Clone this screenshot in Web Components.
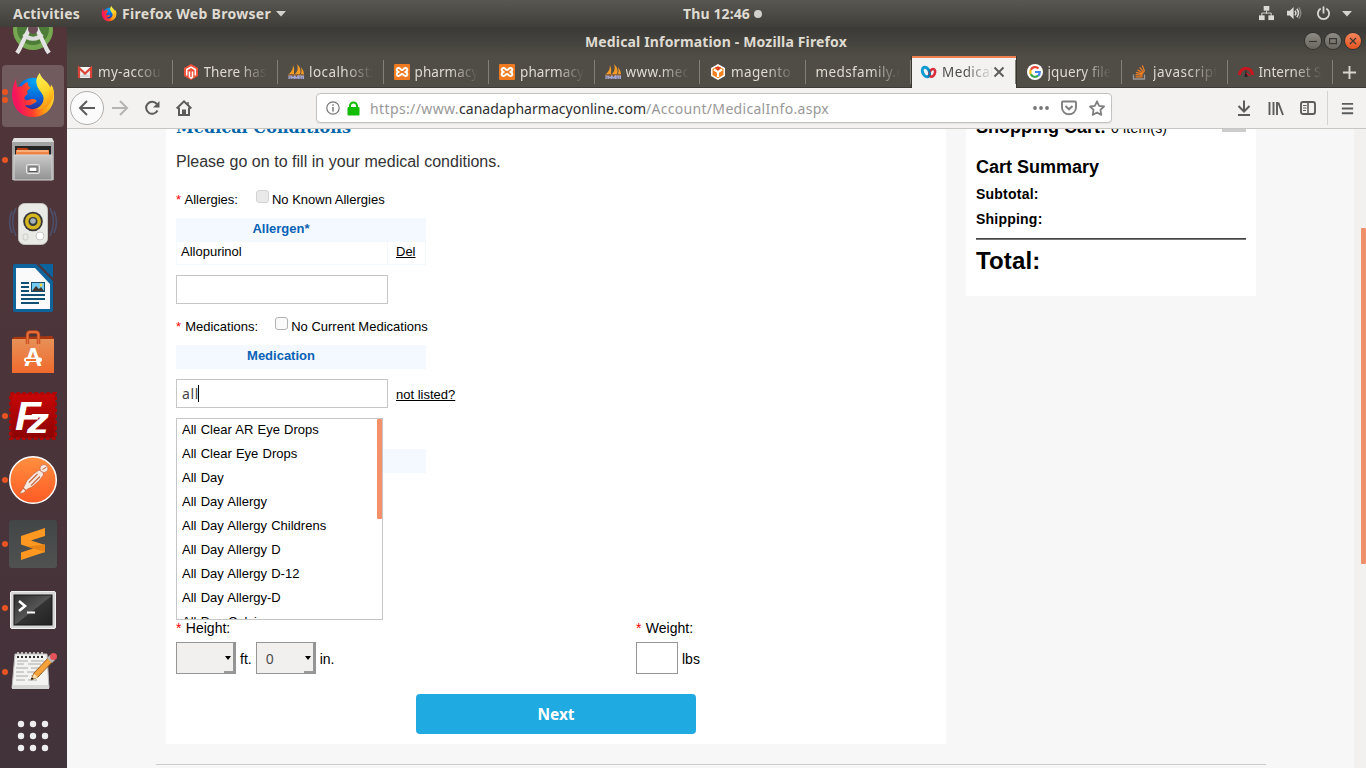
<!DOCTYPE html>
<html lang="en">
<head>
<meta charset="utf-8">
<title>Medical Information - Mozilla Firefox</title>
<style>
html,body{margin:0;height:100%;overflow:hidden}
body{font-family:"Liberation Sans",Arial,sans-serif;color:#000}
</style>
</head>
<body>
<desktop-shell></desktop-shell>
<script>
const UI = '"Noto Sans","Open Sans",sans-serif';

function define(name, css, html, after) {
  const tpl = document.createElement('template');
  tpl.innerHTML = `<style>*{box-sizing:border-box}${css}</style>${html}`;
  customElements.define(name, class extends HTMLElement {
    connectedCallback() {
      if (this.shadowRoot) return;
      this.attachShadow({mode: 'open'}).appendChild(tpl.content.cloneNode(true));
      if (after) after.call(this, this.shadowRoot);
    }
  });
}

/* Single-line label; "w" gives its set width in px, reached by tracking. */
define('ui-label', `:host{display:inline-block;white-space:pre;font-family:${UI}} span{display:inline-block}`,
  `<span><slot></slot></span>`, function (r) {
    const w = +this.getAttribute('w'), s = r.querySelector('span');
    if (w) {
      const n = this.textContent.length, d = (w - s.getBoundingClientRect().width) / n;
      s.style.letterSpacing = d.toFixed(3) + 'px';
      this.style.width = w + 'px';
    }
  });

const foxBody = `<defs><linearGradient id="g1" x1=".1" y1=".6" x2=".95" y2=".4"><stop offset="0" stop-color="#f5145f"/><stop offset=".35" stop-color="#ff3d2e"/><stop offset=".65" stop-color="#ff9412"/><stop offset="1" stop-color="#ffd52e"/></linearGradient><radialGradient id="g2" cx=".55" cy=".1" r=".95"><stop offset="0" stop-color="#00a8f5"/><stop offset=".55" stop-color="#0a64d8"/><stop offset="1" stop-color="#35208c"/></radialGradient><linearGradient id="g3" x1="0" y1="0" x2=".3" y2="1"><stop offset="0" stop-color="#fff45a"/><stop offset=".6" stop-color="#ffd52a"/><stop offset="1" stop-color="#ff9a12"/></linearGradient></defs>
<circle cx="24" cy="22" r="17" fill="url(#g2)"/>
<path d="M6.500 5.500C3 12 1.500 20 2.500 27 4 38 12.500 46 24 46c12 0 21.500-9 22-21 .2-5-1-9-3-12l-8 16c-1 5-6 9-12 8.500-3.500-.3-6-2-7.500-4.500 4 1.500 7 .5 9.500-1.500 1.500-1 3-1 2.500-2.500-.8-2-4-2.500-6-1.500-2.500 1.200-5 1.200-6.500-.5 0-2 1-3.500 3-4.500.3-1.500.5-2.500-.2-3.500 1-1.500 2.800-2.800 4.200-3.500-2.500-.3-3.500-3.500-3.500-6-3 .8-5 3-6.500 4.500-2-.3-3.500 0-4.500.8C6.500 11 6 9 6.500 5.500z" fill="url(#g1)"/>
<path d="M31 0c-4 4.500-4.500 10-2 15 2 4 6 6.500 6 11.500 0 5-3.500 9-7.500 10.500 4 2 9.500 0 13-4 4-4.500 6-9.500 5-15-.5-3-1.500-4.500-3-6 .3 1.500.4 3 0 4C40 8.500 33 7 31 0z" fill="url(#g3)"/>`;

const ICONS = {
  fox: ['0 0 48 48', foxBody],
  studio: ['0 0 48 48', `<g transform="translate(0 6)"><circle cx="24" cy="16" r="20" fill="#75a850"/><circle cx="24" cy="15" r="16" fill="#4d7c38"/><path d="M15 20a11 11 0 0 0 18 0" fill="none" stroke="#ddd" stroke-width="4"/><path d="M22 11 10 36l-2 3M26 11l12 25 2 3" fill="none" stroke="#e3e3e3" stroke-width="4.200"/><circle cx="24" cy="15" r="5" fill="#6a4b56"/></g>`],
  files: ['0 0 48 48', `<defs><linearGradient id="a" y2="1" x2="0"><stop offset="0" stop-color="#c9c9c9"/><stop offset="1" stop-color="#929292"/></linearGradient></defs><path d="M5 2h38l2 4v38H3V6z" fill="#a4a4a4"/><path d="M5 2h38l2 4H3z" fill="#e1e1e1"/><rect x="6" y="10" width="36" height="11" fill="#252525"/><path d="M8 12h10l2 2h20v8H8z" fill="#b83c10"/><path d="M7 14h33v8H7z" fill="#ef8244"/><path d="M8 15h31" stroke="#ffd9ae"/><rect x="5" y="19" width="38" height="25" fill="url(#a)" stroke="#d5d5d5"/><rect x="17.500" y="28.500" width="13" height="9" rx="1.500" fill="#aaa" stroke="#e6e6e6"/><rect x="20" y="31" width="8" height="4.500" fill="#fff" stroke="#555"/>`],
  speaker: ['0 0 48 48', `<g fill="none" stroke="#4c506b" stroke-width="1.600"><path d="M7 8q-7 13 0 28M3 11q-5 11 0 22M41 8q7 13 0 28M45 11q5 11 0 22"/></g><rect x="9.500" y="3.500" width="29" height="41" rx="6" fill="#e9e9e6" stroke="#c4c4c0"/><circle cx="24" cy="21.500" r="9.800" fill="#37373a"/><circle cx="24" cy="21.500" r="8" fill="#d6b720"/><circle cx="24" cy="21.500" r="4.500" fill="#333a40"/><circle cx="24" cy="21" r="2.800" fill="#a7b4b9"/><circle cx="31" cy="36" r="4" fill="#fff" stroke="#c9c9c6"/><rect x="14" y="34" width="5" height="6" rx="2" fill="none" stroke="#ccc"/>`],
  writer: ['0 0 48 48', `<path d="M6 0h21l17 17v29a2 2 0 0 1-2 2H6a2 2 0 0 1-2-2V2a2 2 0 0 1 2-2z" fill="#10649c"/><path d="M7 4h19l15 16v25H7z" fill="#fafafa"/><path d="M30 0h14v14z" fill="#0c649e"/><path d="M12 19h8m-8 4h8m-8 4h8m-8 4h24m-24 4h24m-24 4h18" stroke="#114f75" stroke-width="2"/><rect x="22.500" y="18.500" width="13" height="9" fill="#74cbef" stroke="#174f70"/><path d="m23 27 4-5 3 3 2-2 3 4z" fill="#43362f"/><circle cx="32" cy="21" r="1.400" fill="#ffd22e"/>`],
  store: ['0 0 48 48', `<defs><linearGradient id="a" y2="1" x2="0"><stop offset="0" stop-color="#e79158"/><stop offset="1" stop-color="#f06a2c"/></linearGradient></defs><path d="m5 9 38-1 2 3v4H3v-4z" fill="#a8360f"/><path d="M3 11h42v34H3z" fill="url(#a)"/><path d="M18.500 16V7q0-3 3-3h5q3 0 3 3v9" fill="none" stroke="#b9471b" stroke-width="3.400"/><path d="M18.500 16V7q0-3 3-3h5q3 0 3 3v9" fill="none" stroke="#e56d39" stroke-width="2"/><text x="24" y="38" text-anchor="middle" font-family="Liberation Sans" font-weight="700" font-size="25" fill="#fff">A</text><rect x="15" y="29.500" width="18" height="4.500" rx="2" fill="#fff"/><rect x="17" y="31" width="10" height="2" fill="#ee7433"/>`],
  fz: ['0 0 48 48', `<defs><linearGradient id="a" y2="1" x2="0"><stop offset="0" stop-color="#c80606"/><stop offset="1" stop-color="#8b0404"/></linearGradient></defs><rect x="1.500" y="1.500" width="45" height="45" fill="url(#a)" /><rect x="1.500" y="1.500" width="45" height="45" fill="none" stroke="#b00505" stroke-width="3" stroke-dasharray="3.500 2.500"/><g font-family="Liberation Sans" font-weight="700" font-style="italic" fill="#fff"><text x="6" y="38" font-size="41" textLength="26" lengthAdjust="spacingAndGlyphs">F</text><text x="18" y="41" font-size="35" textLength="22" lengthAdjust="spacingAndGlyphs">z</text></g>`],
  postman: ['0 0 48 48', `<defs><linearGradient id="a" y2="1" x2="0"><stop offset="0" stop-color="#ff9040"/><stop offset="1" stop-color="#ff5a24"/></linearGradient></defs><circle cx="24" cy="24" r="23.300" fill="url(#a)" stroke="#fff" stroke-width="1.500"/><path d="m10.500 37.500 3.500-5 4-8 7-7 5-3.500 4 2 .5 3-4.500 6-7 6-4.500 2-4 4z" fill="#f6e8df" stroke="#c96038" stroke-width=".7"/><path d="M20 26.500 28.500 18M22 29.500l9-9M14 32l3 2.500" stroke="#ca6a43" stroke-width="1.200"/><circle cx="35" cy="12.500" r="4" fill="#f6e8df" stroke="#c96038" stroke-width=".7"/><path d="m33.500 13.500 4-2.500" stroke="#bd5630"/>`],
  sublime: ['0 0 48 48', `<defs><linearGradient id="a" y2="1" x2="0"><stop offset="0" stop-color="#434646"/><stop offset="1" stop-color="#505252"/></linearGradient></defs><rect width="48" height="48" rx="3" fill="url(#a)"/><path d="m12 32.500 24-8v7.500l-24 8z" fill="#ff9821"/><path d="m12 16 24-8v8l-14 4.500L36 25v7.500l-24-8z" fill="#ff9821"/><path d="m18 26.500 18-2v7.500z" fill="#e68416"/>`],
  term: ['0 0 48 48', `<defs><linearGradient id="a" x2="1" y2="1"><stop offset="0" stop-color="#2e2e2e"/><stop offset=".5" stop-color="#555"/><stop offset=".52" stop-color="#333"/><stop offset="1" stop-color="#222"/></linearGradient></defs><rect x="1.500" y="7.500" width="45" height="37" rx="1.500" fill="#d6d6d6" stroke="#f0f0f0"/><rect x="5" y="11" width="38" height="30" fill="url(#a)" stroke="#171717"/><path d="m10 17 6 5-6 5" stroke="#fff" stroke-width="2.600" fill="none"/><path d="M18 28.500h8" stroke="#fff" stroke-width="2"/>`],
  note: ['0 0 48 48', `<path d="m6 6 32 0 2 34H3z" fill="#f3f3f1" stroke="#bababa"/><path d="M3 37h37v4H3z" fill="#d6d6d4"/><path d="M8 13h11m3 0h13M8 16h7m4 0h13M7 20h12m3 0h9M7 24h8m3 0h13M7 28h12m3 0h8M7 32h9m3 0h9" stroke="#aaa" stroke-width="1"/><g fill="none" stroke="#ddd" stroke-width="1.500"><path d="M9 9V4m4 5V4m4 5V4m4 5V4m4 5V4m4 5V4m4 5V4"/></g><path d="M8 9h27" stroke="#333" stroke-width="2" stroke-dasharray="2"/><path d="m25 25 16-17 4 4-16 17-7 3z" fill="#f6a23b" stroke="#9b5d1f"/><path d="m25 26 4 3-7 3z" fill="#f9dca9"/><path d="m22 31 2-1 0 1z" stroke="#222"/><path d="m38 10 3-3 5 5-3 3z" fill="#b8b8b8"/><circle cx="44.500" cy="8.500" r="3.500" fill="#e2535a"/>`],
  apps: ['0 0 48 48', `<g fill="#eee"><circle cx="12" cy="12" r="3.200"/><circle cx="24" cy="12" r="3.200"/><circle cx="36" cy="12" r="3.200"/><circle cx="12" cy="24" r="3.200"/><circle cx="24" cy="24" r="3.200"/><circle cx="36" cy="24" r="3.200"/><circle cx="12" cy="36" r="3.200"/><circle cx="24" cy="36" r="3.200"/><circle cx="36" cy="36" r="3.200"/></g>`],
  gmail: ['0 0 16 16', `<rect x="1" y="3" width="14" height="11" fill="#eee"/><path d="m3 13 5-5 5 5z" fill="#d5d5d5"/><path d="M2 14V4l6 5.500L14 4v10" fill="none" stroke="#db4437" stroke-width="2.200"/><path d="M3.500 3h9L8 7z" fill="#fafafa"/>`],
  magento: ['0 0 16 16', `<path d="m8 0 7 4v8l-7 4-7-4V4z" fill="#ef5138"/><path d="M3.700 11.500V5.500L8 3l4.300 2.500v6M6.500 13V7.500m3 0V13L8 14 6.500 13" fill="none" stroke="#fff" stroke-width="1.500"/>`],
  pma: ['0 0 16 16', `<path d="M1 10Q5 7 5 1q2 4 1 9zM7 10q4-4 2-10 5 5 3 10zM13 10q1-3 0-7 3 4 3 7z" fill="#f59a25"/><path d="M0 11h16" stroke="#ce7a22"/><path d="M1 15v-3h2v2H1m3 1v-3m2 3v-3m-2 1.500h2M7 15v-3l1.500 2L10 12v3m1 0v-3h2v2h-2m3 1v-3h1.500v3" fill="none" stroke="#a6a6d2" stroke-width="1.100"/>`],
  xampp: ['0 0 16 16', `<rect width="16" height="16" rx="1" fill="#f07a20"/><path d="M5.500 8C2 8 2 4 4.500 4 6.500 4 6.500 6 8 6s1.500-2 3.500-2C14 4 14 8 10.500 8c3.500 0 3.500 4 1 4-2 0-2-2-3.500-2s-1.500 2-3.500 2C2 12 2 8 5.500 8z" fill="none" stroke="#fff" stroke-width="2"/>`],
  cube: ['0 0 16 16', `<path d="m8 0 7 4v8l-7 4-7-4V4z" fill="#fff"/><path d="m8 2 5.500 3v6L8 14.300 2.500 11V5z" fill="#f48120"/><path d="M4 5.500 8 8v5M12 5.500 8 8" stroke="#fff" stroke-width="2.200" fill="none"/><path d="m5 3 3 4 3-4z" fill="#df3b28"/>`],
  meds: ['0 0 16 16', `<ellipse cx="5" cy="8" rx="3.300" ry="5" transform="rotate(-25 5 8)" fill="none" stroke="#129bd3" stroke-width="3"/><ellipse cx="11.300" cy="8.800" rx="2.600" ry="4" transform="rotate(22 11.300 8.800)" fill="none" stroke="#d72d3a" stroke-width="2.600"/><path d="M8 5.500 9 10l-2 3" fill="none" stroke="#087aad" stroke-width="2"/>`],
  google: ['0 0 16 16', `<circle cx="8" cy="8" r="8" fill="#fff"/><g fill="none" stroke-width="2.200"><path d="M11.500 4.500A4.800 4.800 0 0 0 3.800 5.700" stroke="#ea4335"/><path d="M3.800 5.700a4.800 4.800 0 0 0 0 4.600" stroke="#fbbc05"/><path d="M3.800 10.300a4.800 4.800 0 0 0 7.400 1.400" stroke="#34a853"/><path d="M11.200 11.700A4.800 4.800 0 0 0 12.800 8H8" stroke="#4285f4"/></g>`],
  stack: ['0 0 16 16', `<path d="M1.500 10.500V15h11v-4.500" fill="none" stroke="#999" stroke-width="1.300"/><path d="M3.500 12.800h7M3.600 10.600l7 .6M4 8.300l6.700 1.900M5.500 5.800l5.700 3.700M7.700 3.400l4.200 5.200M10.300 1.500l2.300 6" stroke="#f48024" stroke-width="1.200"/>`],
  speed: ['0 0 16 16', `<path d="M1.500 11a6.500 6.500 0 1 1 13 0" fill="none" stroke="#c9151d" stroke-width="3"/><path d="M6.500 13 8 5l1.500 8z" fill="#222"/><path d="m8 9 4.500 3" stroke="#c9151d" stroke-width="1.500"/>`],
  lan: ['0 0 16 16', `<g fill="#dcdad5"><rect x="5" y="0" width="6" height="5"/><rect x="0" y="10" width="6" height="5"/><rect x="10" y="10" width="6" height="5"/></g><path d="M8 5v3M3 11V7.500h10V11" fill="none" stroke="#dcdad5"/>`],
  vol: ['0 0 16 16', `<path d="M0 5h3l4-4v13L3 10H0z" fill="#dcdad5"/><path d="M8.500 5q2 2.500 0 5M10.500 3q3.500 4.500 0 9" fill="none" stroke="#dcdad5" stroke-width="1.600"/><path d="M12.500 1.500q4.500 6 0 12" fill="none" stroke="#8b8983" stroke-width="1.500"/>`],
  power: ['0 0 16 16', `<path d="M5 2.800a6 6 0 1 0 6 0" fill="none" stroke="#dcdad5" stroke-width="1.900"/><path d="M8 .5V8" stroke="#dcdad5" stroke-width="1.900"/>`],
  caret: ['0 0 10 6', `<path d="M0 0h10L5 5.500z" fill="#d5d3ce"/>`],
  back: ['0 0 16 16', `<path d="M16 8H1.500M8 1 1 8l7 7" fill="none" stroke="#5c5c5c" stroke-width="2"/>`],
  fwd: ['0 0 16 16', `<path d="M0 8h14.500M8 1l7 7-7 7" fill="none" stroke="#b5b4b3" stroke-width="2"/>`],
  reload: ['0 0 16 16', `<path d="M13.500 10.500A6 6 0 1 1 12.800 4" fill="none" stroke="#5c5c5c" stroke-width="2"/><path d="M15.500 1v6.500H9z" fill="#5c5c5c"/>`],
  home: ['0 0 16 16', `<path d="M.7 8.500 8 1.300l7.300 7.200" fill="none" stroke="#5c5c5c" stroke-width="2"/><path d="M3 7.500v7.500h10V7.500" fill="none" stroke="#5c5c5c" stroke-width="2"/><path d="M6 14V9.500h4V14z" fill="#5c5c5c"/><path d="M12 2v4" stroke="#5c5c5c" stroke-width="1.500"/>`],
  info: ['0 0 14 14', `<circle cx="7" cy="7" r="6.200" fill="none" stroke="#757575" stroke-width="1.200"/><path d="M7 6v4.500M7 3.300v1.500" stroke="#757575" stroke-width="1.500"/>`],
  lock: ['0 0 13 15', `<rect x=".5" y="6" width="12" height="8.500" rx="1" fill="#12bc00"/><path d="M3 8V5a3.500 3.500 0 0 1 7 0v3" fill="none" stroke="#12bc00" stroke-width="2"/>`],
  dots: ['0 0 16 16', `<g fill="#777"><circle cx="2" cy="8" r="1.900"/><circle cx="8" cy="8" r="1.900"/><circle cx="14" cy="8" r="1.900"/></g>`],
  pocket: ['0 0 16 16', `<path d="M2 1.500h12a1 1 0 0 1 1 1V7.500a7 6.800 0 0 1-14 0v-5a1 1 0 0 1 1-1z" fill="none" stroke="#808080" stroke-width="1.900"/><path d="M4.500 6 8 9.300 11.500 6" fill="none" stroke="#808080" stroke-width="2"/>`],
  star: ['0 0 16 16', `<path d="m8 1.300 2.100 4.600 4.900.6-3.600 3.400.9 5L8 12.500l-4.300 2.400.9-5L1 6.500l4.900-.6z" fill="none" stroke="#808080" stroke-width="1.800" stroke-linejoin="round"/>`],
  down: ['0 0 16 16', `<path d="M8 .5V11M2.500 6 8 11.500 13.500 6M2 15h12" fill="none" stroke="#5c5c5c" stroke-width="2"/>`],
  lib: ['0 0 16 16', `<path d="M1.500 2v13M5.500 2v13M9 2v13M10.300 2.500 15 15" fill="none" stroke="#5c5c5c" stroke-width="1.900"/>`],
  side: ['0 0 16 16', `<rect x="1" y="2" width="14" height="12" rx="2" fill="none" stroke="#5c5c5c" stroke-width="1.900"/><path d="M8 2v12" stroke="#5c5c5c" stroke-width="1.600"/><path d="M3 5.500h3.500M3 8h3.500M3 10.500h3" stroke="#5c5c5c"/>`],
  menu: ['0 0 16 16', `<path d="M2 3h12M2 8h12M2 13h12" stroke="#5c5c5c" stroke-width="2"/>`],
  plus: ['0 0 16 16', `<path d="M8 1v14M1 8h14" stroke="#d8d6d0" stroke-width="2"/>`],
  close: ['0 0 12 12', `<path d="m1.500 1.500 9 9m0-9-9 9" stroke="#5c5c5c" stroke-width="1.900"/>`]
};

define('ui-icon', `:host{display:block;flex:none}svg{display:block;width:100%;height:100%;overflow:visible}`, ``, function (r) {
  const [vb, body] = ICONS[this.getAttribute('name')];
  const w = +this.getAttribute('size') || 16, h = +this.getAttribute('h') || w;
  this.style.width = w + 'px'; this.style.height = h + 'px';
  r.innerHTML += `<svg viewBox="${vb}">${body}</svg>`;
});

define('top-bar', `:host{display:grid;grid-template-columns:670px auto 1fr;height:27px;background:linear-gradient(#595751,#3f3e39);color:#dfdbd2;font:bold 14px/27px ${UI};align-items:center;padding:0 14px 0 13px}
  .l,.r{display:flex;align-items:center}.r{justify-content:flex-end}.app{margin:0 5px 0 21px}.c{display:flex;align-items:center;gap:4px}
  i{width:8px;height:8px;border-radius:50%;background:#d2d0cb}.car{margin-left:5px}`,
  `<div class="l"><ui-label w="67">Activities</ui-label><ui-icon class="app" name="fox" size="16"></ui-icon><ui-label w="149">Firefox Web Browser</ui-label><ui-icon class="car" name="caret" size="10" h="6"></ui-icon></div>
   <div class="c"><ui-label w="67">Thu 12:46</ui-label><i></i></div>
   <div class="r"><ui-icon name="lan" size="15"></ui-icon><ui-icon name="vol" size="15" style="margin-left:13px"></ui-icon><ui-icon name="power" size="15" style="margin-left:14px"></ui-icon><ui-icon name="caret" size="10" h="6" style="margin-left:11px"></ui-icon></div>`);

define('dock-item', `:host{display:flex;height:64px;flex:none;align-items:center;padding-left:9px;position:relative}
  :host([active])::before{content:"";position:absolute;left:2px;top:1px;width:62px;height:62px;border-radius:4px;background:rgba(255,255,255,.19)}
  .dots{position:absolute;left:2px;top:0;height:64px;display:flex;flex-direction:column;justify-content:center;gap:2px}
  i{width:6px;height:6px;border-radius:50%;background:#e95420}ui-icon{position:relative}`,
  `<div class="dots"></div>`, function (r) {
    r.querySelector('.dots').innerHTML = '<i></i>'.repeat(+this.getAttribute('dots') || 0);
    r.innerHTML += `<ui-icon name="${this.getAttribute('icon')}" size="${this.getAttribute('size') || 48}"></ui-icon>`;
  });

define('app-dock', `:host{display:flex;flex-direction:column;justify-content:flex-end;width:67px;flex:none;overflow:hidden;background:linear-gradient(#513539,#4b353a 50%,#44323a 90%,#41333a)}
  .fox{padding-left:10px}`,
  `<dock-item icon="studio"></dock-item><dock-item class="fox" icon="fox" size="46" dots="2" active></dock-item><dock-item icon="files" dots="1"></dock-item><dock-item icon="speaker"></dock-item><dock-item icon="writer"></dock-item><dock-item icon="store"></dock-item><dock-item icon="fz" dots="1"></dock-item><dock-item icon="postman" dots="1"></dock-item><dock-item icon="sublime" dots="1"></dock-item><dock-item icon="term" dots="1"></dock-item><dock-item icon="note" dots="1"></dock-item><dock-item icon="apps"></dock-item>`);

define('window-title', `:host{display:grid;grid-template-columns:518px auto 1fr;align-items:center;height:29px;background:linear-gradient(#3a3935,#4f4c45);color:#dfdbd2;font:bold 14px/29px ${UI};padding-right:5px}
  .t{display:block;margin-top:-1px}.b{display:flex;justify-content:flex-end;gap:4px;margin-top:-2px}
  i{width:16px;height:16px;border-radius:50%;background:linear-gradient(#8d8b84,#68665f);display:grid;place-items:center;box-shadow:0 0 0 1px #34332f}
  .x{background:linear-gradient(#f6865c,#e4531f)}svg{width:8px;height:8px;fill:none;stroke:#3a3834;stroke-width:1.200}`,
  `<span></span><ui-label class="t" w="262">Medical Information - Mozilla Firefox</ui-label><div class="b"><i><svg><path d="M0 4.500h8"/></svg></i><i><svg><path d="M.6 1.600h6.800v5H.6z"/></svg></i><i class="x"><svg><path d="m1 1 6 6m0-6-6 6"/></svg></i></div>`);

define('browser-tab', `:host{display:flex;align-items:center;width:105.500px;flex:none;height:32px;position:relative;padding:0 11px 0 10px;color:#dfdbd2;font:13.500px/32px ${UI}}
  :host::after,:host(:not([active]):not([last]))::after{content:"";position:absolute;right:0;top:4px;height:24px;width:1px;background:#827f78}
  :host([active]){background:#f3f2f1;color:#4c4c4c;border:solid #363530;border-width:0 1px;box-shadow:inset 0 2px #ef7f52;padding-left:9px}
  .t{flex:1;min-width:0;overflow:hidden;white-space:pre;margin-left:5px;-webkit-mask-image:linear-gradient(90deg,#000 calc(100% - 28px),transparent)}
  .none{margin-left:0}`, ``, function (r) {
    const ic = this.getAttribute('icon'), act = this.hasAttribute('active');
    r.innerHTML += `${ic ? `<ui-icon name="${ic}" size="16"></ui-icon>` : ''}<div class="t${ic ? '' : ' none'}"><ui-label w="${this.getAttribute('w')}">${this.getAttribute('label')}</ui-label></div>${act ? '<ui-icon name="close" size="12"></ui-icon>' : ''}`;
  });

define('tab-strip', `:host{display:flex;align-items:center;height:32px;background:#504d46;box-shadow:inset 0 -1px #3b3a36}
  .new{margin-left:9px}`,
  `<browser-tab icon="gmail" label="my-accou" w="63"></browser-tab><browser-tab icon="magento" label="There has" w="63"></browser-tab><browser-tab icon="pma" label="localhost:" w="65"></browser-tab><browser-tab icon="xampp" label="pharmacy" w="64"></browser-tab><browser-tab icon="xampp" label="pharmacy" w="64"></browser-tab><browser-tab icon="pma" label="www.med" w="66"></browser-tab><browser-tab icon="cube" label="magento" w="60"></browser-tab><browser-tab label="medsfamily.c" w="88" last></browser-tab><browser-tab icon="meds" label="Medical" w="52" active></browser-tab><browser-tab icon="google" label="jquery file" w="64"></browser-tab><browser-tab icon="stack" label="javascript" w="66"></browser-tab><browser-tab icon="speed" label="Internet S" w="63"></browser-tab><ui-icon class="new" name="plus" size="15"></ui-icon>`);

define('nav-bar', `:host{display:flex;align-items:center;height:41px;background:#f3f2f1;border-bottom:1px solid #c8c6c3;padding:0 11px 0 3px;font:14px/28px ${UI}}
  .back{width:34px;height:34px;border-radius:50%;border:1px solid #b0aeac;background:#fbfbfb;display:grid;place-items:center}
  .url{display:flex;align-items:center;width:796px;height:30px;margin-left:124px;background:#fff;border:1px solid #c4c2bf;border-radius:4px;padding:0 6px 0 9px;color:#999;box-shadow:0 1px 1px #0001}
  .url ui-label{margin-top:2px}
  .d{color:#2e2e2e}.sep{width:1px;height:34px;background:#d5d3d1;margin:0 12px 0 11px}`,
  `<div class="back"><ui-icon name="back" size="16"></ui-icon></div><ui-icon name="fwd" size="16" style="margin-left:8px"></ui-icon><ui-icon name="reload" size="16" style="margin-left:16px"></ui-icon><ui-icon name="home" size="16" style="margin-left:16px"></ui-icon>
  <div class="url"><ui-icon name="info" size="14"></ui-icon><ui-icon name="lock" size="13" h="15" style="margin:0 10px 0 7px"></ui-icon><ui-label w="89">https://www.</ui-label><ui-label class="d" w="187">canadapharmacyonline.com</ui-label><ui-label w="183">/Account/MedicalInfo.aspx</ui-label><span style="flex:1"></span><ui-icon name="dots"></ui-icon><ui-icon name="pocket" style="margin:0 12px"></ui-icon><ui-icon name="star"></ui-icon></div>
  <span style="flex:1"></span><ui-icon name="down"></ui-icon><ui-icon name="lib" style="margin:0 16px"></ui-icon><ui-icon name="side"></ui-icon><span class="sep"></span><ui-icon name="menu" size="15"></ui-icon>`);

define('field-label', `:host{display:block;white-space:pre;word-spacing:.5px}b{color:red;font-weight:400}`, `<b>*</b> <slot></slot>`);
define('check-box', `:host{display:flex;font-size:13px}i{width:13px;height:13px;margin:0 3px 0 0;border:1px solid #b4b2b0;border-radius:3px;background:#fafafa;flex:none}:host([disabled]) i{background:#e9e9e9;border-color:#d4d4d4}`, `<i></i><slot></slot>`);
define('grid-head', `:host{display:block;width:250px;height:24px;background:#f4f9ff;color:#0862b5;font:bold 13px/22px "Liberation Sans",Arial,sans-serif;text-align:center}div{width:210px}`, `<div><slot></slot></div>`);
define('text-field', `:host{display:flex;align-items:center;width:212px;height:29px;border:1px solid #c6c6c6;background:#fff;padding:0 0 1px 5px;font:14px ${UI};color:#444}`, `<slot></slot>`);
define('select-box', `:host{display:flex;align-items:center;justify-content:space-between;width:60px;height:32px;background:#f1f0ef;border:1px solid #959595;border-right-width:3px;padding:0 1px 0 9px;font:14px "Noto Sans",sans-serif;color:#4c4c4c;position:relative}
  i{border:4px solid transparent;border-top-color:#000;border-bottom:0;border-left-width:3.500px;border-right-width:3.500px;margin:0 1px 1px 0}
  u{position:absolute;right:-1px;bottom:0;width:10px;height:2px;background:#999}`, `<span><slot></slot></span><i></i><u></u>`);
define('suggest-list', `:host{display:block;width:207px;height:202px;border:1px solid #c6c6c6;background:#fff;overflow:hidden;padding-left:5px;position:relative;font-size:13px;word-spacing:.6px}
  p{margin:0;height:24px;line-height:22px}i{position:absolute;right:0;top:0;width:5px;height:100px;border-radius:1px;background:#f4916b}`, `<i></i>`, function (r) {
    r.innerHTML += this.getAttribute('items').split('|').map(t => `<p>${t}</p>`).join('');
  });

define('medical-form', `:host{display:block;width:780px;height:615px;background:#fff;padding:0 10px;overflow:hidden;font-size:13px;line-height:20px}
  h2{margin:-11px 0 0;height:20px;line-height:20px;color:#06a;font-size:16px}
  p{margin:14px 0 18px;font-size:16px;color:#333;height:20px;word-spacing:.12px}
  .row{display:flex;height:20px;gap:17px}.me{margin:13px 0 8px}
  .al{margin-bottom:8px;gap:18px}
  .tr{display:grid;grid-template-columns:210px 40px;width:250px;height:23px;border:1px solid #f4f9ff;border-top:0}
  .tr span{padding-left:4px;line-height:20px}.tr span+span{padding-left:8px;border-left:1px solid #f4f9ff}
  u{text-decoration-thickness:1px;text-underline-offset:1px}
  .f1{margin-top:10px}.med{display:flex;margin:10px 0;gap:8px;align-items:center}.med u{margin-top:3px}
  .caret{width:1px;height:17px;background:#000;margin-left:-1px}
  .drop{display:grid;grid-template-columns:1fr;height:200px}.drop>*{grid-area:1/1}.drop grid-head{margin-top:31px}.drop suggest-list{position:relative;z-index:1}
  .hw{display:grid;grid-template-columns:460px auto;font-size:14px;row-gap:4px;line-height:20px}
  .in{display:flex;gap:4px;align-items:center;height:32px}.w{width:42px;height:32px;border:1px solid #959595}.in span{margin-top:2px}
  .next{width:280px;height:40px;margin:20px auto 0;border-radius:4px;background:#1faae1;color:#fff;font:bold 15.500px/40px ${UI};text-align:center}`,
  `<h2><ui-label w="175" style="font-family:'DejaVu Serif',serif">Medical Conditions</ui-label></h2>
  <p>Please go on to fill in your medical conditions.</p>
  <div class="row al"><field-label>Allergies:</field-label><check-box disabled>No Known Allergies</check-box></div>
  <grid-head>Allergen*</grid-head><div class="tr"><span>Allopurinol</span><span><u>Del</u></span></div>
  <text-field class="f1"></text-field>
  <div class="row me"><field-label>Medications:</field-label><check-box>No Current Medications</check-box></div>
  <grid-head>Medication</grid-head>
  <div class="med"><text-field><ui-label w="17">all</ui-label><i class="caret"></i></text-field><u>not listed?</u></div>
  <div class="drop"><grid-head></grid-head><suggest-list items="All Clear AR Eye Drops|All Clear Eye Drops|All Day|All Day Allergy|All Day Allergy Childrens|All Day Allergy D|All Day Allergy D-12|All Day Allergy-D|All Day Calcium"></suggest-list></div>
  <div class="hw"><field-label>Height:</field-label><field-label>Weight:</field-label><div class="in"><select-box></select-box><span>ft.</span><select-box>0</select-box><span>in.</span></div><div class="in"><div class="w"></div><span>lbs</span></div></div>
  <div class="next"><ui-label w="37">Next</ui-label></div>`);

define('cart-panel', `:host{display:block;width:290px;height:167px;background:#fff;padding:0 10px;font-size:14px;font-weight:700;overflow:hidden}
  .top{display:flex;height:22px;margin-top:-13px;line-height:22px;gap:5px}.top b{font-size:18px}.top span{font-weight:400;margin-top:1px;letter-spacing:.2px}.top i{margin:1px 0 5px auto;width:24px;height:15px;background:#ccc}
  h3{font-size:18px;line-height:20px;margin:19px 0 5px}div.s{height:25px;line-height:25px;letter-spacing:.22px}hr{margin:6px 0 8px;border:0;height:2px;background:linear-gradient(#444 50%,#777 50%)}h1{font-size:24px;line-height:26px;margin:0;letter-spacing:.15px}`,
  `<div class="top"><b>Shopping Cart:</b><span>0 item(s)</span><i></i></div><h3>Cart Summary</h3><div class="s">Subtotal:</div><div class="s">Shipping:</div><hr><h1>Total:</h1>`);

define('page-view', `:host{display:flex;flex:1;min-height:0;background:#f7f7f7;overflow:hidden}
  .page{flex:1;padding-left:89px}.cols{display:flex;gap:20px;margin-left:10px}.foot{width:1110px;height:1px;background:#ccc;margin-top:20px}
  .bar{width:12px;background:#f2f1f0;display:flex;justify-content:flex-end;padding-top:99px}.bar i{width:5px;height:336px;background:#f0906a;border-radius:1px}`,
  `<div class="page"><div class="cols"><medical-form></medical-form><cart-panel></cart-panel></div><div class="foot"></div></div><div class="bar"><i></i></div>`);

define('browser-window', `:host{display:flex;flex-direction:column;flex:1;min-width:0}`,
  `<window-title></window-title><tab-strip></tab-strip><nav-bar></nav-bar><page-view></page-view>`);

define('desktop-shell', `:host{display:flex;flex-direction:column;width:1366px;height:768px;overflow:hidden}.m{display:flex;height:741px}`,
  `<top-bar></top-bar><div class="m"><app-dock></app-dock><browser-window></browser-window></div>`);
</script>
</body>
</html>
